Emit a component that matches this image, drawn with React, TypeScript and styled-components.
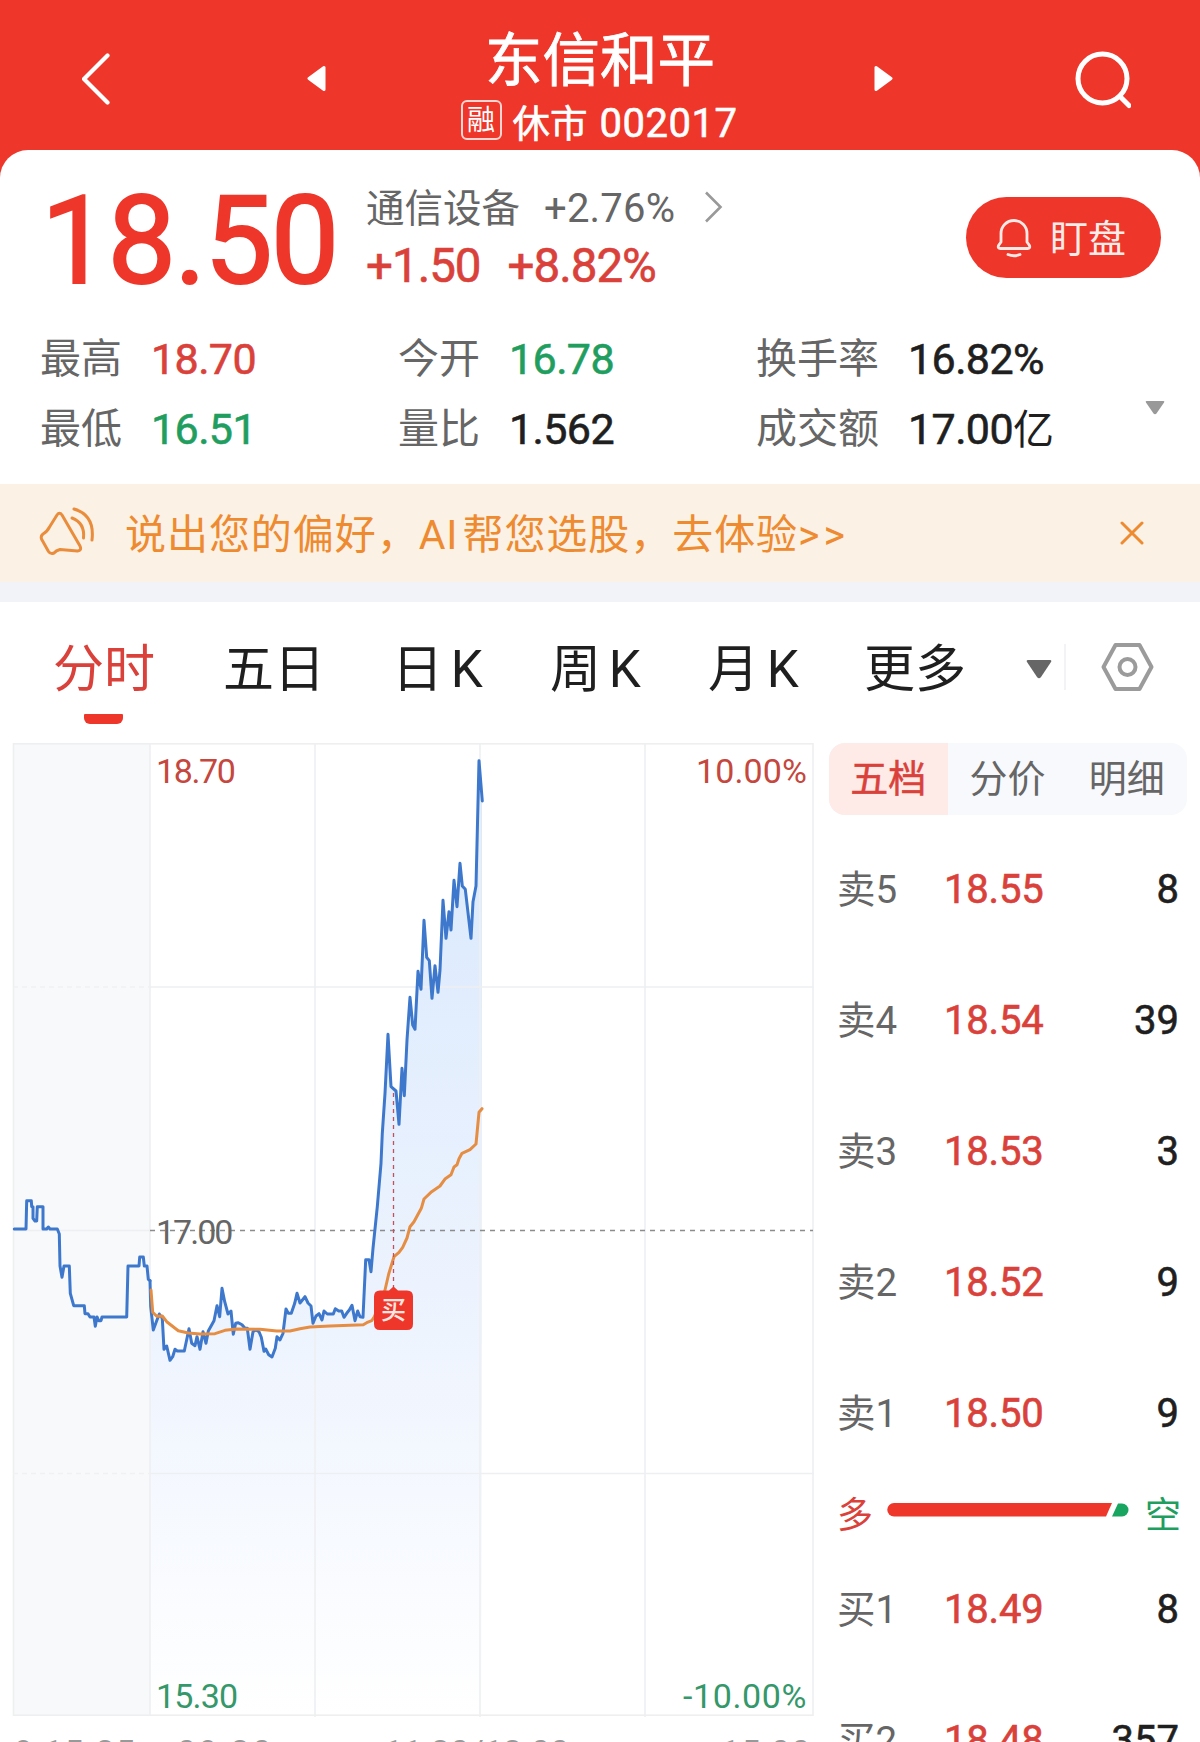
import React, { useState } from 'react';
import styled, { createGlobalStyle } from 'styled-components';

const RED = '#ee372a';
const UP = '#d9413a';
const DOWN = '#1f9e60';
const INK = '#1f1f1f';
const GRAY = '#666';

const GlobalStyle = createGlobalStyle`
  * {
    box-sizing: border-box;
  }

  body {
    margin: 0;
    background: #fff;
    font-family: Roboto, 'Noto Sans CJK SC', sans-serif;
  }

  svg {
    display: block;
    flex: none;
  }
`;

const Page = styled.main`
  width: 1200px;
  height: 1742px;
  overflow: hidden;
  background: #fff;
  white-space: nowrap;
`;

const Header = styled.header`
  height: 184px;
  padding: 0 69px 0 82px;
  display: flex;
  align-items: flex-start;
  justify-content: space-between;
  background: ${RED};

  > svg {
    margin-top: 50px;
  }
`;

const Switcher = styled.div`
  width: 586px;
  display: flex;
  justify-content: space-between;

  > svg {
    margin-top: 65px;
  }
`;

const TitleBlock = styled.div`
  display: flex;
  flex-direction: column;
  align-items: center;
  color: #fff;
`;

const StockName = styled.h1`
  margin: 29px 0 0;
  font-size: 57.5px;
  line-height: 66px;
  font-weight: 400;
  -webkit-text-stroke: 0.8px;
`;

const StockCode = styled.div`
  display: flex;
  align-items: flex-start;
  height: 48px;
  margin: 5px 2px 0 0;
  font-size: 37.5px;
  line-height: 48px;
  font-weight: 400;
  -webkit-text-stroke: 0.6px;

  b {
    margin-left: 12px;
    font-size: 40px;
    font-weight: 400;
    letter-spacing: 0.5px;
  }
`;

const MarginTag = styled.span`
  width: 41px;
  height: 40px;
  margin-right: 11px;
  border: 2px solid #fbd5d1;
  border-radius: 6px;
  font-size: 28px;
  line-height: 38px;
  text-align: center;
  -webkit-text-stroke: 0;
`;

const Quote = styled.section`
  height: 334px;
  margin-top: -34px;
  padding: 34px 35px 0 41px;
  border-radius: 28px 28px 0 0;
  background: #fff;
`;

const QuoteTop = styled.div`
  display: flex;
  height: 138px;
`;

const Price = styled.div`
  width: 325px;
  margin-top: 8px;
  font-size: 122px;
  line-height: 100px;
  letter-spacing: -2px;
  -webkit-text-stroke: 2px;
  color: ${RED};
`;

const Sector = styled.div`
  display: flex;
  align-items: center;
  height: 46px;
  font-size: 38.5px;
  line-height: 46px;
  color: ${GRAY};

  em {
    padding-top: 3px;
    font-style: normal;
  }

  span {
    margin: 0 29px 0 24px;
    padding-top: 3px;
    font-size: 40px;
    letter-spacing: 0.2px;
  }
`;

const Change = styled.div`
  display: flex;
  gap: 27px;
  margin-top: 10px;
  font-size: 47.5px;
  line-height: 52px;
  letter-spacing: -1px;
  -webkit-text-stroke: 0.6px;
  color: ${UP};
`;

const WatchButton = styled.button`
  width: 195px;
  height: 81px;
  margin: 13px 4px 0 auto;
  padding: 0 0 0 30px;
  display: flex;
  align-items: center;
  gap: 18px;
  border: 0;
  border-radius: 41px;
  background: ${RED};
  color: #ffece9;
  font: inherit;
  font-size: 38px;

  span {
    padding-bottom: 4px;
  }
`;

const StatsArea = styled.div`
  display: flex;
  align-items: flex-start;

  > svg {
    margin-top: 79px;
  }
`;

const Stats = styled.div`
  display: grid;
  grid-template-columns: 358px 358px 388px;
  grid-auto-rows: 70px;
`;

const Stat = styled.div`
  display: flex;
  align-items: center;
  font-size: 41px;
  line-height: 50px;
  color: ${GRAY};
`;

const StatLabel = styled.span`
  margin-left: -1px;
  padding-top: 4px;
`;

const StatValue = styled.span<{ $color?: string }>`
  margin-left: 29px;
  padding-top: 3px;
  font-size: 43px;
  letter-spacing: -0.6px;
  -webkit-text-stroke: 0.6px;
  color: ${({ $color }) => $color || INK};

  small {
    font-size: 41px;
    line-height: 1;
    -webkit-text-stroke: 0;
  }
`;

const Banner = styled.div`
  height: 98px;
  padding: 0 56px 0 39px;
  display: flex;
  align-items: center;
  background: #fcf1e5;
  color: #ee8a2f;
  font-size: 41px;
  letter-spacing: 0.95px;

  p {
    flex: 1;
    margin: 0 0 5px 28px;
  }

  b {
    margin-right: 4px;
    font-weight: 400;
  }

  u {
    text-decoration: none;
    letter-spacing: 4px;
  }
`;

const Divider = styled.div`
  height: 20px;
  background: #f2f3f8;
`;

const PeriodBar = styled.nav`
  height: 141px;
  padding-left: 53px;
  display: flex;
  align-items: flex-start;
`;

const Period = styled.button<{ $active?: boolean; $width: number }>`
  width: ${({ $width }) => $width}px;
  padding: 34px 0 0;
  border: 0;
  background: none;
  font: inherit;
  font-size: 51px;
  line-height: 68px;
  text-align: left;
  word-spacing: -5px;
  color: ${({ $active }) => ($active ? UP : INK)};

  &::after {
    content: '';
    display: ${({ $active }) => ($active ? 'block' : 'none')};
    width: 39px;
    height: 10px;
    margin: 10px 0 0 31px;
    border-radius: 1px 1px 6px 6px;
    background: ${RED};
  }
`;

const PeriodTools = styled.div`
  display: flex;
  align-items: center;
  height: 46px;
  margin-top: 42px;

  svg:first-child {
    margin-top: 5px;
  }

  i {
    width: 2px;
    height: 46px;
    margin: 0 35px 0 12px;
    background: #f3f3f5;
  }
`;

const Body = styled.section`
  display: flex;
  align-items: flex-start;
`;

const ChartPanel = styled.div`
  width: 829px;
`;

const TimeAxis = styled.div`
  display: flex;
  padding: 15px 0 0 14px;
  font-size: 34px;
  line-height: 40px;
  color: #999;

  span:nth-child(1) {
    width: 163px;
    letter-spacing: 1.3px;
  }

  span:nth-child(2) {
    width: 207px;
    letter-spacing: 2.4px;
  }

  span:nth-child(3) {
    width: 337px;
    letter-spacing: 0.2px;
  }

  span:nth-child(4) {
    letter-spacing: 1.2px;
  }
`;

const Book = styled.aside`
  width: 358px;
`;

const BookTabs = styled.div`
  display: grid;
  grid-template-columns: repeat(3, 1fr);
  height: 72px;
  margin-bottom: 8px;
  border-radius: 16px;
  overflow: hidden;
  background: #f7f9fc;
`;

const BookTab = styled.button<{ $active: boolean }>`
  padding: 0 1px 7px 0;
  border: 0;
  background: ${({ $active }) => ($active ? '#feeae7' : 'transparent')};
  color: ${({ $active }) => ($active ? UP : GRAY)};
  font: inherit;
  font-size: 38px;
  -webkit-text-stroke: ${({ $active }) => ($active ? '0.5px' : '0')};
`;

const OrderRow = styled.div`
  height: 131px;
  padding: 0 8px 0 8px;
  display: grid;
  grid-template-columns: 107px 1fr auto;
  align-items: center;
  font-size: 40px;
`;

const OrderLabel = styled.span`
  padding-bottom: 6px;
  font-size: 38.5px;
  color: ${GRAY};
`;

const OrderPrice = styled.span`
  padding-top: 2px;
  letter-spacing: -0.2px;
  -webkit-text-stroke: 0.6px;
  color: ${UP};
`;

const OrderQty = styled.span`
  padding-top: 2px;
  -webkit-text-stroke: 0.6px;
  color: ${INK};
`;

const BalanceRow = styled.div`
  height: 65px;
  padding: 0 6px 0 8px;
  display: flex;
  align-items: center;
  justify-content: space-between;
  font-size: 36px;

  svg {
    margin: 0 0 2px -2px;
  }
`;

const Tone = styled.span<{ $color: string }>`
  padding-top: 2px;
  color: ${({ $color }) => $color};
`;

const stats = [
  { label: '最高', value: '18.70', color: UP },
  { label: '今开', value: '16.78', color: DOWN },
  { label: '换手率', value: '16.82%' },
  { label: '最低', value: '16.51', color: DOWN },
  { label: '量比', value: '1.562' },
  { label: '成交额', value: '17.00', unit: '亿' },
];

const periods = [
  { name: '分时', width: 170 },
  { name: '五日', width: 169 },
  { name: '日 K', width: 158 },
  { name: '周 K', width: 158 },
  { name: '月 K', width: 156 },
  { name: '更多', width: 162 },
];

const sells = [
  ['卖5', '18.55', '8'],
  ['卖4', '18.54', '39'],
  ['卖3', '18.53', '3'],
  ['卖2', '18.52', '9'],
  ['卖1', '18.50', '9'],
];

const buys = [
  ['买1', '18.49', '8'],
  ['买2', '18.48', '357'],
];

type Point = [number, number];

// chart data is stored in a space three times finer than the drawn pixels
const shift = (dx: number, dy: number, pts: Point[]): Point[] =>
  pts.map(([x, y]) => [(x + dx) / 3, (y + dy) / 3]);

const toPath = (pts: Point[]) => 'M' + pts.map(([x, y]) => `${x.toFixed(1)} ${y.toFixed(1)}`).join('L');

const auction = shift(0, 1221, [
  [43, 237], [78, 237], [80, 152], [94, 152], [95, 170], [99, 170], [99, 205], [105, 213], [110, 213],
  [112, 170], [129, 170], [129, 237], [140, 237], [145, 231], [150, 237], [172, 237], [178, 252],
  [180, 348], [186, 382], [192, 348], [208, 348], [211, 430], [221, 467], [253, 467], [255, 491],
  [264, 491], [270, 501], [282, 501], [286, 529], [291, 501], [296, 512], [303, 512], [306, 501],
  [380, 501], [384, 348], [417, 348], [419, 321], [430, 321], [433, 348], [441, 348], [445, 388], [450, 392],
]);

const price = [
  ...shift(0, 1221, [
    [450, 392], [452, 470], [460, 540], [470, 512], [478, 492], [487, 505], [492, 598], [500, 588],
    [510, 631], [518, 620], [525, 598], [532, 603], [553, 603], [567, 536], [575, 580], [585, 587],
    [591, 560], [600, 598], [609, 545], [618, 580], [625, 543], [642, 512], [651, 467], [659, 500],
    [666, 415], [674, 455], [684, 492], [693, 483], [700, 553], [707, 520], [715, 518], [726, 524],
    [735, 535], [742, 535], [750, 598], [759, 545], [768, 540], [777, 545], [784, 562], [792, 604],
    [797, 597], [806, 614], [816, 621], [826, 595], [831, 560], [840, 570], [849, 550], [858, 477],
    [865, 490], [874, 490], [884, 460], [891, 430],
  ]),
  ...shift(840, 771, [
    [60, 909], [75, 890], [84, 909], [93, 918], [99, 970], [108, 948], [117, 941], [126, 960], [132, 933],
    [142, 942], [160, 942], [166, 926], [176, 933], [185, 933], [192, 952], [200, 940], [208, 930],
    [216, 916], [225, 962], [233, 933], [240, 950], [249, 952], [257, 779], [267, 779], [273, 815],
    [279, 745], [292, 620], [303, 490], [307, 400], [315, 280], [324, 103], [333, 260], [348, 273],
    [357, 373], [366, 205], [373, 287], [381, 120],
  ]),
  ...shift(1080, -9, [
    [150, 772], [158, 855], [165, 868], [174, 694], [183, 748], [192, 541], [200, 652], [208, 662],
    [216, 775], [225, 677], [234, 757], [240, 690], [249, 481], [258, 595], [267, 515], [273, 570],
    [282, 421], [291, 500], [300, 370], [307, 438], [316, 448], [333, 595], [339, 485], [348, 438],
    [357, 62], [367, 183],
  ]),
];

const average = [
  ...shift(0, 1221, [
    [453, 420], [458, 487], [470, 499], [487, 498], [500, 515], [535, 542], [565, 549], [600, 552],
    [645, 551], [675, 541], [710, 537], [780, 538], [830, 543], [870, 543],
  ]),
  ...shift(840, 771, [
    [60, 986], [90, 981], [150, 978], [210, 976], [250, 974], [260, 968], [275, 962], [283, 950],
    [315, 870], [326, 822], [342, 770], [357, 757], [368, 742], [381, 714], [390, 680], [402, 665],
    [424, 625], [432, 597], [455, 575], [480, 558], [496, 536], [513, 524], [522, 501], [531, 494],
    [537, 476], [546, 460], [570, 449], [588, 432], [597, 337], [606, 326],
  ]),
];

const MinuteChart: React.FC = () => (
  <svg width="829" height="974" viewBox="0 0 829 974" fontSize="34">
    <defs>
      <linearGradient id="priceFill" x1="0" y1="0" x2="0" y2="1">
        <stop offset="0" stopColor="#d8e8fd" />
        <stop offset="0.6" stopColor="#eef4fe" />
        <stop offset="1" stopColor="#ffffff" />
      </linearGradient>
    </defs>
    <rect x="13" y="1" width="137" height="971" fill="#f7f9fb" />
    <path d={`${toPath(price.slice(0, -1))}L482 50V972H150Z`} fill="url(#priceFill)" />
    <g fill="none" stroke="#eeeff1" strokeWidth="1.6">
      <rect x="13.5" y="0.8" width="799.5" height="971.4" />
      <path d="M150 1V972M315 1V974M480 1V974M645 1V974M150 244H814M150 730.5H814M13 487.5H150" />
      <path d="M13 244H150M13 730.5H150" strokeDasharray="5 4" stroke="#f0f1f4" />
    </g>
    <path d="M150 487.5H813" stroke="#8c8c8c" strokeWidth="1.6" strokeDasharray="5 5" />
    <g fill="none" strokeLinejoin="round" strokeLinecap="round" strokeWidth="3">
      <path d={toPath(auction)} stroke="#3d78cc" />
      <path d={toPath(price)} stroke="#3d78cc" />
      <path d={toPath(average)} stroke="#e58d42" />
    </g>
    <path d="M393.5 350V546" stroke="#c4505c" strokeWidth="1.3" strokeDasharray="4 4" />
    <path
      d="M380 547.5H389L393.5 543.5L398 547.5H407Q413 547.5 413 553.5V581Q413 587 407 587H380Q374 587 374 581V553.5Q374 547.5 380 547.5Z"
      fill={RED}
    />
    <text x="393.5" y="576" textAnchor="middle" fontSize="25" fontWeight="500" fill="#ffe6e2">买</text>
    <text x="156" y="40" letterSpacing="-1.4" fill="#c5473d">18.70</text>
    <text x="807" y="40" textAnchor="end" letterSpacing="0.1" fill="#c5473d">10.00%</text>
    <text x="156" y="501" letterSpacing="-2" fill={GRAY}>17.00</text>
    <text x="156" y="965" letterSpacing="-0.8" fill="#35986a">15.30</text>
    <text x="807" y="965" textAnchor="end" letterSpacing="0.6" fill="#35986a">-10.00%</text>
  </svg>
);

const Order: React.FC<{ row: string[] }> = ({ row }) => (
  <OrderRow>
    <OrderLabel>{row[0]}</OrderLabel>
    <OrderPrice>{row[1]}</OrderPrice>
    <OrderQty>{row[2]}</OrderQty>
  </OrderRow>
);

const App: React.FC = () => {
  const [period, setPeriod] = useState('分时');
  const [bookTab, setBookTab] = useState('五档');

  return (
    <Page>
      <GlobalStyle />
      <Header>
        <svg width="43" height="58" viewBox="0 0 43 58" fill="none" stroke="#fff" strokeWidth="4.2" strokeLinecap="round" strokeLinejoin="round">
          <path d="M25.5 5.5L2 29L25.5 52.5" />
        </svg>
        <Switcher>
          <svg width="19" height="28" viewBox="0 0 19 28" fill="#fff" stroke="#fff" strokeWidth="3" strokeLinejoin="round">
            <path d="M17 2.5V24.5L2 13.5Z" />
          </svg>
          <TitleBlock>
            <StockName>东信和平</StockName>
            <StockCode>
              <MarginTag>融</MarginTag>休市<b>002017</b>
            </StockCode>
          </TitleBlock>
          <svg width="19" height="28" viewBox="0 0 19 28" fill="#fff" stroke="#fff" strokeWidth="3" strokeLinejoin="round">
            <path d="M2 2.5V24.5L17 13.5Z" />
          </svg>
        </Switcher>
        <svg width="56" height="60" viewBox="0 0 56 60" fill="none" stroke="#fff" strokeWidth="5" strokeLinecap="round">
          <circle cx="27.5" cy="28.5" r="24.5" />
          <path d="M45 46.5L54 55.5" />
        </svg>
      </Header>

      <Quote>
        <QuoteTop>
          <Price>18.50</Price>
          <div>
            <Sector>
              <em>通信设备</em>
              <span>+2.76%</span>
              <svg width="19" height="32" viewBox="0 0 19 32" fill="none" stroke="#999" strokeWidth="2.6">
                <path d="M2 1.5L16.5 16L2 30.5" />
              </svg>
            </Sector>
            <Change>
              <span>+1.50</span>
              <span>+8.82%</span>
            </Change>
          </div>
          <WatchButton>
            <svg width="36" height="40" viewBox="0 0 36 40" fill="none" stroke="#ffe9e6" strokeWidth="2.8" strokeLinejoin="round" strokeLinecap="round">
              <path d="M5 24V15.5A13 13 0 0 1 31 15.5V24L33.5 27.5Q34.5 30.5 31.5 30.5H4.5Q1.5 30.5 2.5 27.5Z" />
              <path d="M12 36.5Q18 39 24 36.5" />
            </svg>
            <span>盯盘</span>
          </WatchButton>
        </QuoteTop>
        <StatsArea>
          <Stats>
            {stats.map((s) => (
              <Stat key={s.label}>
                <StatLabel>{s.label}</StatLabel>
                <StatValue $color={s.color}>
                  {s.value}
                  {s.unit && <small>{s.unit}</small>}
                </StatValue>
              </Stat>
            ))}
          </Stats>
          <svg width="20" height="14" viewBox="0 0 20 14" fill="#999">
            <path d="M1.5 0H18.5Q20 0 19 1.6L11.5 12.5Q10 14 8.5 12.5L1 1.6Q0 0 1.5 0Z" />
          </svg>
        </StatsArea>
      </Quote>

      <Banner>
        <svg width="58" height="52" viewBox="0 0 58 52" fill="none" stroke="#e98d3c" strokeWidth="3" strokeLinecap="round" strokeLinejoin="round">
          <path d="M18 8Q20.5 4.5 23 8L41 39Q43 43.5 38.5 44L21 42.5Q17 43.5 15 46Q11.5 47.5 9.5 44.5L2.5 32Q1.5 29 4 27Q8 25 10.5 20Z" />
          <path d="M33 11Q46 16 44.5 31" />
          <path d="M35 2Q56 8 53 33" />
        </svg>
        <p>
          说出您的偏好，<b>AI</b>帮您选股，去体验<u>&gt;&gt;</u>
        </p>
        <svg width="24" height="24" viewBox="0 0 24 24" stroke="#ee8a2f" strokeWidth="3" strokeLinecap="round">
          <path d="M2 2L22 22M22 2L2 22" />
        </svg>
      </Banner>
      <Divider />

      <PeriodBar>
        {periods.map((p) => (
          <Period key={p.name} $width={p.width} $active={p.name === period} onClick={() => setPeriod(p.name)}>
            {p.name}
          </Period>
        ))}
        <PeriodTools>
          <svg width="26" height="19" viewBox="0 0 26 19" fill="#666">
            <path d="M2 0H24Q26 0 25 2L15 17Q13 19.5 11 17L1 2Q0 0 2 0Z" />
          </svg>
          <i />
          <svg width="53" height="48" viewBox="0 0 53 48" fill="none" stroke="#9b9b9b" strokeWidth="4" strokeLinejoin="round">
            <path d="M14.5 2H38.5L50.5 24L38.5 46H14.5L2.5 24Z" />
            <circle cx="26.5" cy="24" r="8" />
          </svg>
        </PeriodTools>
      </PeriodBar>

      <Body>
        <ChartPanel>
          <MinuteChart />
          <TimeAxis>
            <span>9:15-25</span>
            <span>09:30</span>
            <span>11:30/13:00</span>
            <span>15:00</span>
          </TimeAxis>
        </ChartPanel>
        <Book>
          <BookTabs>
            {['五档', '分价', '明细'].map((name) => (
              <BookTab key={name} $active={name === bookTab} onClick={() => setBookTab(name)}>
                {name}
              </BookTab>
            ))}
          </BookTabs>
          {sells.map((row) => (
            <Order key={row[0]} row={row} />
          ))}
          <BalanceRow>
            <Tone $color={UP}>多</Tone>
            <svg width="242" height="14" viewBox="0 0 242 14">
              <path d="M7 0H225L219 13.5H7A6.7 6.7 0 0 1 7 0Z" fill={RED} />
              <path d="M231 0.5H235A6.5 6.5 0 0 1 235 13.5H225Z" fill="#18a55f" />
            </svg>
            <Tone $color={DOWN}>空</Tone>
          </BalanceRow>
          {buys.map((row) => (
            <Order key={row[0]} row={row} />
          ))}
        </Book>
      </Body>
    </Page>
  );
};

export default App;
